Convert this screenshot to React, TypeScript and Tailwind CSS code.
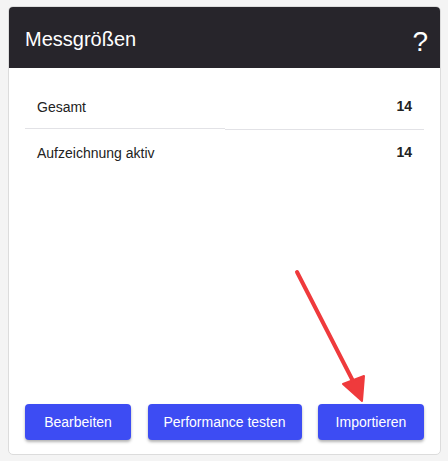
import React from "react";

const rows = [
  { label: "Gesamt", value: 14 },
  { label: "Aufzeichnung aktiv", value: 14 },
];

const buttons = [
  { label: "Bearbeiten", w: "w-[106px]" },
  { label: "Performance testen", w: "w-[154px]" },
  { label: "Importieren", w: "w-[106px]" },
];

export default function App() {
  return (
    <div className="relative h-[461px] w-[448px] bg-[#f4f4f4] pt-[6px] pl-[8px] font-['Liberation_Sans',Arial,sans-serif]">
      <div className="flex h-[449px] w-[433px] flex-col overflow-hidden rounded-[5px] border border-[#dcdcdc] bg-white">
        <div className="flex h-[61px] shrink-0 items-center justify-between bg-[#27252b] pl-[16px] pr-[12px]">
          <h1 className="mt-[3px] text-[20px] text-white">Messgrößen</h1>
          <span className="mt-[8px] text-[28px] leading-none text-white">?</span>
        </div>

        <div className="flex-1 px-[16px] pt-[16px]">
          {rows.map((r, i) => (
            <div key={r.label}>
              <div className="flex h-[44px] items-center justify-between px-[12px] text-[14px] text-[#222]">
                <span className="mt-[2px]">{r.label}</span>
                <span className="font-bold">{r.value}</span>
              </div>
              {i === 0 && (
                <div className="flex h-[2px]">
                  <div className="h-px w-1/2 bg-[#e2e2e6]" />
                  <div className="mt-px h-px w-1/2 bg-[#e2e2e6]" />
                </div>
              )}
            </div>
          ))}
        </div>

        <div className="flex justify-between px-[16px] pb-[14px]">
          {buttons.map((b) => (
            <button
              key={b.label}
              className={
                "h-[36px] rounded-[4px] bg-[#3d4cf3] text-[14px] text-white shadow-[0_2px_3px_rgba(0,0,0,0.3)] " + b.w
              }
            >
              {b.label}
            </button>
          ))}
        </div>
      </div>

      <svg className="pointer-events-none absolute left-0 top-0" width="448" height="461" viewBox="0 0 448 461">
        <line x1="297" y1="272" x2="355" y2="385" stroke="#ef3a3c" strokeWidth="4" strokeLinecap="round" />
        <polygon points="362,401 343,384 364,376" fill="#ef3a3c" stroke="#ef3a3c" strokeWidth="2" strokeLinejoin="round" />
      </svg>
    </div>
  );
}
